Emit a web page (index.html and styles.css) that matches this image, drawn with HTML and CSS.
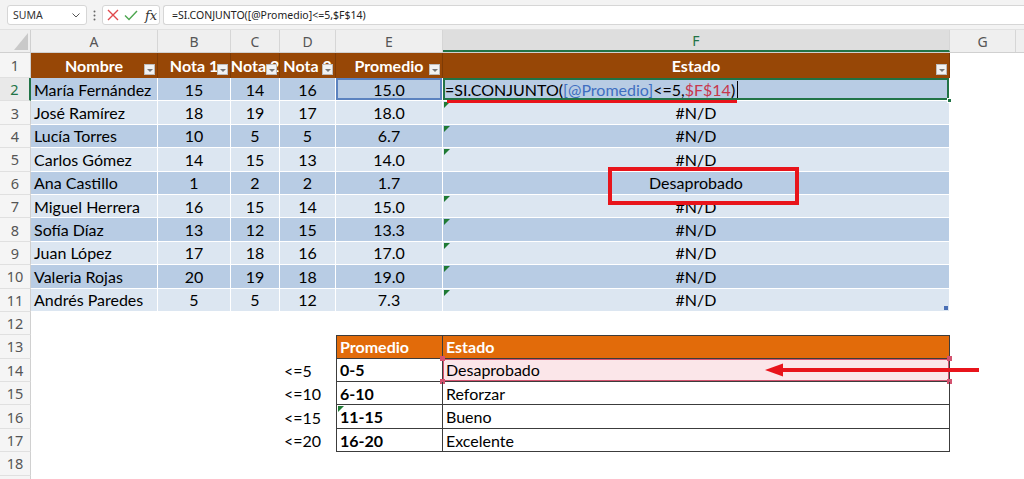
FILE: index.html
```html
<!DOCTYPE html>
<html lang="es">
<head>
<meta charset="utf-8">
<title>SI.CONJUNTO</title>
<link rel="stylesheet" href="styles.css">
</head>
<body>
<div class="app">
  <div class="fbar">
    <div class="namebox">
      <span>SUMA</span>
      <svg class="chev" width="8" height="5" viewBox="0 0 8 5"><path d="M0.5 0.5 L4 4 L7.5 0.5" fill="none" stroke="#555" stroke-width="1"/></svg>
    </div>
    <div class="vdots">
      <svg width="3" height="11" viewBox="0 0 3 11"><circle cx="1.5" cy="1.5" r="1" fill="#666"/><circle cx="1.5" cy="5.5" r="1" fill="#666"/><circle cx="1.5" cy="9.5" r="1" fill="#666"/></svg>
    </div>
    <div class="fbtns">
      <svg width="12" height="12" viewBox="0 0 12 12"><path d="M1 1 L11 11 M11 1 L1 11" stroke="#e0484b" stroke-width="1.4" fill="none"/></svg>
      <svg width="14" height="11" viewBox="0 0 14 11"><path d="M1 5.5 L5 9.5 L13 1" stroke="#4ca64f" stroke-width="1.4" fill="none"/></svg>
      <span class="fx">fx</span>
    </div>
    <div class="finput">=SI.CONJUNTO([@Promedio]&lt;=5,$F$14)</div>
  </div>

  <div class="sheet">
    <div class="row colhdr">
      <div class="corner"><span class="tri"></span></div>
      <div class="ch">A</div><div class="ch">B</div><div class="ch">C</div><div class="ch">D</div><div class="ch">E</div><div class="ch sel">F</div><div class="ch">G</div><div class="ch end"></div>
    </div>

    <div class="row r1">
      <div class="rh">1</div>
      <div class="th">Nombre<span class="flt"></span></div>
      <div class="th">Nota 1<span class="flt"></span></div>
      <div class="th">Nota 2<span class="flt"></span></div>
      <div class="th">Nota 3<span class="flt"></span></div>
      <div class="th">Promedio<span class="flt"></span></div>
      <div class="th">Estado<span class="flt"></span></div>
      <div></div><div></div>
    </div>

    <div class="row">
      <div class="rh selrow">2</div>
      <div class="td dk name">María Fernández</div>
      <div class="td dk">15</div><div class="td dk">14</div><div class="td dk">16</div>
      <div class="td dk refcell">15.0</div>
      <div class="td dk fcell">
        <span class="fml">=SI.CONJUNTO(<span class="refb">[@Promedio]</span>&lt;=5,<span class="refr">$F$14</span>)</span><span class="caret"></span>
        <span class="uline"></span><span class="handle"></span>
      </div>
      <div></div><div></div>
    </div>

    <div class="row">
      <div class="rh">3</div>
      <div class="td lt name">José Ramírez</div>
      <div class="td lt">18</div><div class="td lt">19</div><div class="td lt">17</div><div class="td lt">18.0</div>
      <div class="td lt err">#N/D</div><div></div><div></div>
    </div>
    <div class="row">
      <div class="rh">4</div>
      <div class="td dk name">Lucía Torres</div>
      <div class="td dk">10</div><div class="td dk">5</div><div class="td dk">5</div><div class="td dk">6.7</div>
      <div class="td dk err">#N/D</div><div></div><div></div>
    </div>
    <div class="row">
      <div class="rh">5</div>
      <div class="td lt name">Carlos Gómez</div>
      <div class="td lt">14</div><div class="td lt">15</div><div class="td lt">13</div><div class="td lt">14.0</div>
      <div class="td lt err">#N/D</div><div></div><div></div>
    </div>
    <div class="row">
      <div class="rh">6</div>
      <div class="td dk name">Ana Castillo</div>
      <div class="td dk">1</div><div class="td dk">2</div><div class="td dk">2</div><div class="td dk">1.7</div>
      <div class="td dk">Desaprobado</div><div></div><div></div>
    </div>
    <div class="row">
      <div class="rh">7</div>
      <div class="td lt name">Miguel Herrera</div>
      <div class="td lt">16</div><div class="td lt">15</div><div class="td lt">14</div><div class="td lt">15.0</div>
      <div class="td lt err">#N/D</div><div></div><div></div>
    </div>
    <div class="row">
      <div class="rh">8</div>
      <div class="td dk name">Sofía Díaz</div>
      <div class="td dk">13</div><div class="td dk">12</div><div class="td dk">15</div><div class="td dk">13.3</div>
      <div class="td dk err">#N/D</div><div></div><div></div>
    </div>
    <div class="row">
      <div class="rh">9</div>
      <div class="td lt name">Juan López</div>
      <div class="td lt">17</div><div class="td lt">18</div><div class="td lt">16</div><div class="td lt">17.0</div>
      <div class="td lt err">#N/D</div><div></div><div></div>
    </div>
    <div class="row">
      <div class="rh">10</div>
      <div class="td dk name">Valeria Rojas</div>
      <div class="td dk">20</div><div class="td dk">19</div><div class="td dk">18</div><div class="td dk">19.0</div>
      <div class="td dk err">#N/D</div><div></div><div></div>
    </div>
    <div class="row">
      <div class="rh">11</div>
      <div class="td lt name">Andrés Paredes</div>
      <div class="td lt">5</div><div class="td lt">5</div><div class="td lt">12</div><div class="td lt">7.3</div>
      <div class="td lt err last">#N/D<span class="resize"></span></div><div></div><div></div>
    </div>

    <div class="row">
      <div class="rh">12</div>
    </div>
    <div class="row">
      <div class="rh">13</div>
      <div></div><div></div><div></div><div></div>
      <div class="lk lh first top">Promedio</div>
      <div class="lk lh top">Estado</div>
    </div>
    <div class="row">
      <div class="rh">14</div>
      <div></div><div></div><div></div>
      <div class="cond">&lt;=5</div>
      <div class="lk first key">0-5</div>
      <div class="lk hl">Desaprobado<span class="sq tl"></span><span class="sq tr"></span><span class="sq bl"></span><span class="sq br"></span></div>
    </div>
    <div class="row">
      <div class="rh">15</div>
      <div></div><div></div><div></div>
      <div class="cond">&lt;=10</div>
      <div class="lk first key">6-10</div>
      <div class="lk">Reforzar</div>
    </div>
    <div class="row">
      <div class="rh">16</div>
      <div></div><div></div><div></div>
      <div class="cond">&lt;=15</div>
      <div class="lk first key err2">11-15</div>
      <div class="lk">Bueno</div>
    </div>
    <div class="row">
      <div class="rh">17</div>
      <div></div><div></div><div></div>
      <div class="cond">&lt;=20</div>
      <div class="lk first key">16-20</div>
      <div class="lk">Excelente</div>
    </div>
    <div class="row">
      <div class="rh">18</div>
    </div>
    <div class="row tail">
      <div class="rh"></div>
    </div>
  </div>

  <div class="redbox"></div>
  <svg class="arrow" width="222" height="16" viewBox="0 0 222 16">
    <path d="M18 6 L218 6 L218 10 L18 10 Z" fill="#e8141b"/>
    <path d="M4 8 L22 1.5 L22 14.5 Z" fill="#e8141b"/>
  </svg>
</div>
</body>
</html>
```

FILE: styles.css
```css
* { box-sizing: border-box; }
html, body { margin: 0; padding: 0; background: #ffffff; }
body { width: 1024px; height: 479px; overflow: hidden; font-family: "Lato", "Liberation Sans", sans-serif; }

.app { position: relative; width: 1024px; height: 479px; overflow: hidden; background: #ffffff; }

/* formula bar */
.fbar {
  height: 30px;
  background: #f3f3f3;
  display: flex;
  align-items: flex-start;
  padding: 5px 0 0 7px;
  border-bottom: 1px solid #e1e1e1;
  font-family: "Noto Sans", "Open Sans", sans-serif;
}
.namebox {
  width: 80px; height: 20px;
  background: #fff; border: 1px solid #d6d6d6; border-radius: 3px;
  display: flex; align-items: center; justify-content: space-between;
  padding: 0 6px 0 5px;
  font-size: 10.5px; color: #333;
}
.vdots { width: 15px; height: 20px; display: flex; align-items: center; justify-content: center; }
.fbtns {
  width: 58px; height: 20px;
  background: #fff; border: 1px solid #d6d6d6; border-radius: 3px;
  display: flex; align-items: center; gap: 5px; padding-left: 4px;
}
.fx { font-family: "DejaVu Serif", "Liberation Serif", serif; font-style: italic; font-size: 13px; color: #333; margin-left: 2px; }
.finput {
  flex: 1; height: 20px; margin-left: 3px;
  background: #fff; border: 1px solid #d6d6d6; border-right: none; border-radius: 3px 0 0 3px;
  display: flex; align-items: center; padding-left: 8px;
  font-size: 10.5px; color: #222;
}

/* sheet */
.sheet { display: flex; flex-direction: column; }
.row {
  display: grid;
  grid-template-columns: 31px 127px 73px 49px 56px 107px 507px 66px 1fr;
  height: 23.4px;
  flex-shrink: 0;
}
.row.tail { height: 10px; }
.colhdr { height: 23px; background: #efefef; border-bottom: 1px solid #d0d0d0; }
.r1 { height: 25px; }

.corner { position: relative; border-right: 1px solid #d0d0d0; }
.tri {
  position: absolute; right: 2px; bottom: 2px;
  width: 0; height: 0;
  border-left: 14px solid transparent;
  border-bottom: 17px solid #c9c9c9;
}
.ch {
  display: flex; align-items: center; justify-content: center;
  border-right: 1px solid #d6d6d6;
  font-family: "Noto Sans", "Open Sans", sans-serif; font-size: 14px; color: #555;
}
.ch.sel { background: #dedede; color: #217346; border-bottom: 2px solid #217346; }
.ch.end { border-right: none; }

.rh {
  display: flex; align-items: center; justify-content: center;
  background: #f5f5f5;
  border-right: 1px solid #d0d0d0;
  border-bottom: 1px solid #e0e0e0;
  font-family: "Noto Sans", "Open Sans", sans-serif; font-size: 14.5px; color: #555;
}
.rh.selrow { color: #217346; background: #e9e9e9; border-right: 2px solid #217346; }

/* table header */
.th {
  position: relative;
  display: flex; align-items: center; justify-content: center;
  background: #974706; color: #fff;
  font-weight: 700; font-size: 16px;
  border-right: 1px solid #7e3b05;
  overflow: hidden; white-space: nowrap;
}
.flt {
  position: absolute; right: 2px; bottom: 3px;
  width: 11px; height: 11px;
  background: #f2f2f2; border: 1px solid #bdbdbd;
}
.flt::after {
  content: ""; position: absolute; left: 2px; top: 4px;
  border-left: 3px solid transparent; border-right: 3px solid transparent;
  border-top: 3px solid #777;
}

/* table body */
.td {
  position: relative;
  display: flex; align-items: center; justify-content: center;
  font-size: 16px; color: #000;
  border-right: 1px solid #fff; border-bottom: 1px solid #fff;
  white-space: nowrap;
}
.td.name { justify-content: flex-start; padding-left: 3px; }
.dk { background: #b8cce4; }
.lt { background: #dce6f1; }
.refcell { box-shadow: inset 0 0 0 2px #5b82bf; }
.fcell {
  justify-content: flex-start; padding-left: 2px;
  box-shadow: inset 0 0 0 2px #217346;
  overflow: visible;
}
.refb { color: #3f6fc0; }
.refr { color: #c8374c; }
.caret { display: inline-block; width: 1px; height: 17px; background: #000; margin-left: 2px; }
.uline {
  position: absolute; left: 4px; top: 100%;
  width: 290px; height: 3px; background: #e8141b; z-index: 3;
}
.handle {
  position: absolute; right: -3px; bottom: -3px;
  width: 5px; height: 5px; background: #217346; border: 1px solid #fff; z-index: 2;
}
.err::before, .err2::before {
  content: ""; position: absolute; left: 1px; top: 1px;
  border-top: 6px solid #1f7a34; border-right: 6px solid transparent;
}
.resize {
  position: absolute; right: 1px; bottom: 1px;
  width: 4px; height: 4px; background: #4a6fb5;
}

/* lookup table */
.cond { display: flex; align-items: center; padding-left: 4px; font-size: 16px; color: #000; }
.lk {
  position: relative;
  display: flex; align-items: center; padding-left: 3px;
  font-size: 16px; color: #000;
  border-right: 1px solid #3c3c3c; border-bottom: 1px solid #3c3c3c;
}
.lk.first { border-left: 1px solid #3c3c3c; }
.lk.top { border-top: 1px solid #3c3c3c; }
.lh { background: #e26b0a; color: #fff; font-weight: 700; }
.key { font-weight: 700; }
.hl { background: #fbe6e9; box-shadow: inset 0 0 0 1px #d3536f; }
.sq { position: absolute; width: 5px; height: 5px; background: #d3536f; }
.sq.tl { left: -3px; top: -3px; }
.sq.tr { right: -3px; top: -3px; }
.sq.bl { left: -3px; bottom: -3px; }
.sq.br { right: -3px; bottom: -3px; }

/* annotations */
.redbox {
  position: absolute; left: 608px; top: 167px;
  width: 191px; height: 38px;
  border: 4px solid #e8141b;
}
.arrow { position: absolute; left: 761px; top: 362px; }
```
